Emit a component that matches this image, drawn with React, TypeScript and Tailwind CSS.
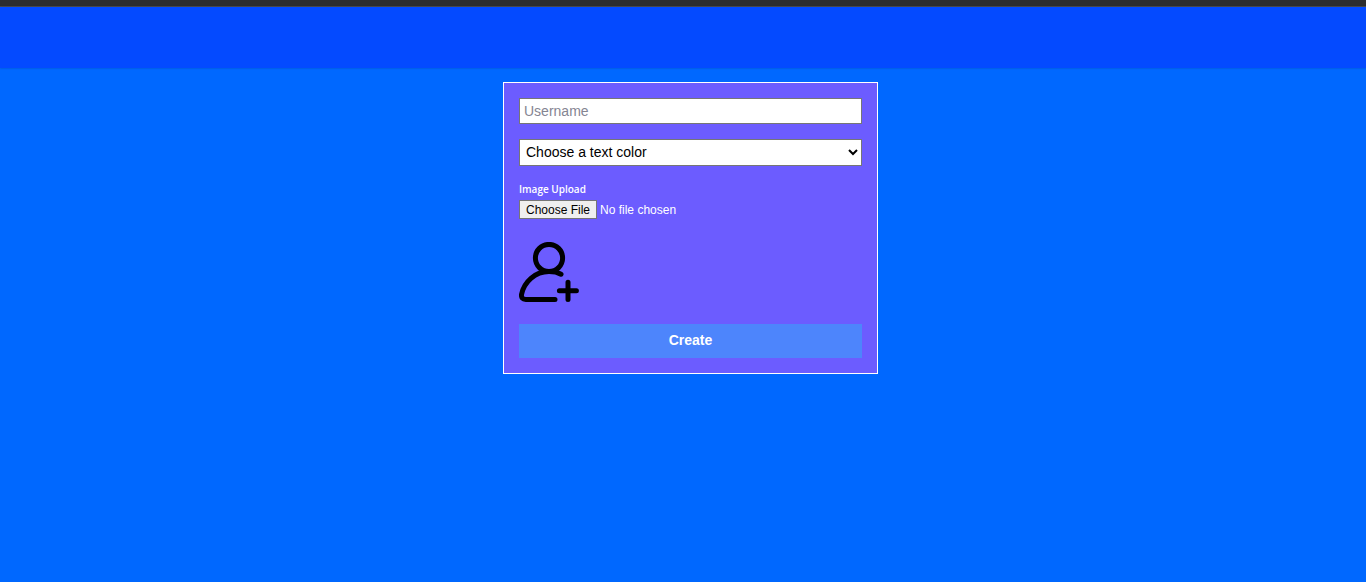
export default function App() {
  return (
    <div className="min-h-screen bg-[#0068ff] font-['Liberation_Sans',Arial,sans-serif]">
      <div className="h-[7px] border-b border-[#505050] bg-[#2d2d2d]" />
      <header className="h-[61px] bg-[#044aff] shadow-[0_0_2px_rgba(0,0,0,0.25)]" />
      <main className="flex justify-center pt-3.5 pl-[15px]">
        <form
          className="flex w-full max-w-[375px] flex-col border border-white bg-[#6c5cff] p-[15px]"
          onSubmit={(event) => event.preventDefault()}
        >
          <input
            type="text"
            aria-label="Username"
            placeholder="Username"
            className="h-[26px] w-full border border-[#767676] bg-white px-1 text-sm text-black placeholder:text-[#858592]"
          />
          <select
            aria-label="Text color"
            defaultValue=""
            className="mt-[15px] h-[27px] w-full border border-[#767676] bg-white px-0.5 pb-0.5 text-sm text-black"
          >
            <option value="">Choose a text color</option>
            <option value="black">Black</option>
            <option value="white">White</option>
            <option value="red">Red</option>
          </select>
          <label
            htmlFor="image-upload"
            className="mt-[15px] font-['Open_Sans',sans-serif] text-[10px] leading-4 font-semibold text-white"
          >
            Image Upload
          </label>
          <input
            id="image-upload"
            type="file"
            className="mt-[3px] h-5 w-full text-xs leading-[18px] text-white file:mr-[3px] file:h-[19px] file:border file:border-solid file:border-[#767676] file:bg-[#efefef] file:px-[6px] file:text-xs file:leading-4 file:text-black"
          />
          <svg
            viewBox="0 0 60 60"
            className="mt-[22px] size-[60px]"
            fill="none"
            stroke="#000"
            strokeWidth="5"
            strokeLinecap="round"
            strokeLinejoin="round"
            aria-hidden="true"
          >
            <circle cx="30" cy="16" r="13.6" />
            <path d="M42 32.2C38 30 34 29.6 30 29.6C16 29.6 5 40 2.5 52.5Q2 57.4 6.8 57.4H36" />
            <path d="M49 40.2V57.4M40.4 48.8H57.4" />
          </svg>
          <button type="submit" className="mt-[22px] h-[34px] w-full bg-[#4d85fc] pb-0.5 text-sm font-bold text-white">
            Create
          </button>
        </form>
      </main>
    </div>
  );
}
